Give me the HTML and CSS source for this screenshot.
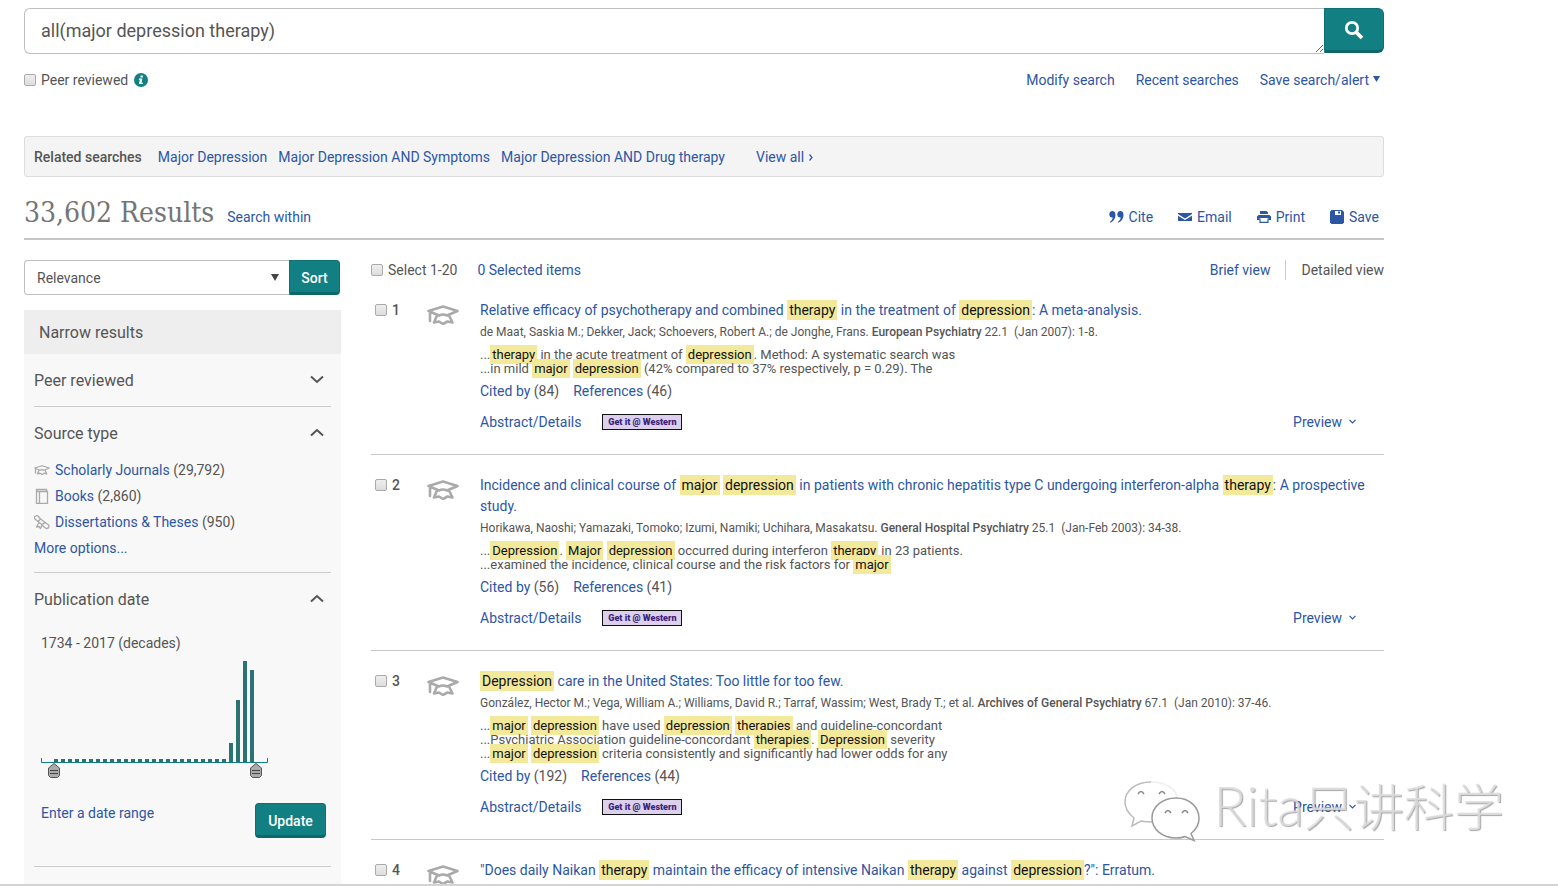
FILE: index.html
```html
<!DOCTYPE html>
<html lang="en">
<head>
<meta charset="utf-8">
<title>Search results</title>
<link rel="stylesheet" href="styles.css">
</head>
<body>
<svg class="sprite" aria-hidden="true">
  <symbol id="cap" viewBox="0 0 32 20">
    <path d="M1.500 6 16 1.500 30.500 6 20 10.500q-4-2-8 0zM3 7v9M10 10.500 7 17.500l5-1 4 2.500 4.500-2.500 5 1-3.500-7" fill="none" stroke="currentColor" stroke-width="2.600" stroke-linejoin="round" stroke-linecap="round"/>
  </symbol>
  <symbol id="down" viewBox="0 0 14 9"><path d="m1 1.500 6 5.500 6-5.500" fill="none" stroke="currentColor" stroke-width="2"/></symbol>
  <symbol id="up" viewBox="0 0 14 9"><path d="m1 7.500 6-5.500 6 5.500" fill="none" stroke="currentColor" stroke-width="2"/></symbol>
  <symbol id="small-down" viewBox="0 0 7 5"><path d="M.5.8 3.500 3.800 6.500.8" fill="none" stroke="currentColor" stroke-width="1.200"/></symbol>
</svg>

<div class="page">
  <div class="content">
    <form class="search">
      <textarea class="search-box" rows="1" aria-label="Search">all(major depression therapy)</textarea>
      <button class="button search-button" type="button" aria-label="Run search">
        <svg width="20" height="20" viewBox="0 0 20 20"><circle cx="8" cy="8" r="5.700" fill="none" stroke="#fff" stroke-width="2.800"/><path d="m12 12 6 6" stroke="#fff" stroke-width="3.800"/></svg>
      </button>
    </form>

    <div class="search-options">
      <label class="check"><input type="checkbox"><span>Peer reviewed</span></label>
      <svg class="info" width="14" height="14" viewBox="0 0 14 14"><circle cx="7" cy="7" r="7" fill="#128083"/><path d="M6.500 2.500h2.300v2H6.500zM5 5.500h3.300L7.600 9.800H9L8.800 11H4.900l.9-4.300H4.800z" fill="#fff"/></svg>
      <nav class="search-links">
        <a href="#">Modify search</a>
        <a href="#">Recent searches</a>
        <a href="#">Save search/alert<svg class="caret" width="7" height="6" viewBox="0 0 7 6"><path d="M0 0h7L3.500 6z" fill="currentColor"/></svg></a>
      </nav>
    </div>

    <div class="related">
      <strong class="related-title">Related searches</strong>
      <a href="#">Major Depression</a>
      <a href="#">Major Depression AND Symptoms</a>
      <a href="#">Major Depression AND Drug therapy</a>
      <a class="view-all" href="#">View all<svg width="4" height="7" viewBox="0 0 4 7"><path d="m.5.500 2.500 3-2.500 3" fill="none" stroke="currentColor" stroke-width="1.200"/></svg></a>
    </div>

    <header class="results-head">
      <h1 class="count">33,602 Results</h1>
      <a href="#">Search within</a>
      <nav class="tools">
        <a href="#"><svg width="15" height="14" viewBox="0 0 15 14"><path id="q" d="M3.300 1C5.300 1 6.500 2.600 6.500 5c0 3.500-2 6.300-5.300 7.800L.7 12c1.900-1.200 2.900-2.700 3-4.500C1.700 7.900.3 6.300.3 4.200.3 2.400 1.500 1 3.300 1z" fill="currentColor"/><use href="#q" x="8"/></svg>Cite</a>
        <a href="#"><svg width="14" height="14" viewBox="0 0 14 14"><path d="M0 3h14v1L7 8.500 0 4zM0 5.800l7 4.300 7-4.300V11H0z" fill="currentColor"/></svg>Email</a>
        <a href="#"><svg width="14" height="14" viewBox="0 0 14 14"><path d="M3 1h6.500L11 2.500V4H3zM1.500 5h11L14 6.500V10h-2.500V8h-9v2H0V6.500z" fill="currentColor"/><path d="M3 8.500V12.400h8V8.500" fill="none" stroke="currentColor" stroke-width="1.200"/></svg>Print</a>
        <a href="#"><svg width="14" height="14" viewBox="0 0 14 14"><path d="M1.500 0H12l2 2v10.500L12.500 14h-11L0 12.500v-11z" fill="currentColor"/><path d="M5 1h6v4H5z" fill="#fff"/><path d="M8 1.500h2v2H8z" fill="currentColor"/></svg>Save</a>
      </nav>
    </header>

    <div class="columns">
      <aside class="sidebar">
        <form class="sort">
          <div class="select-wrap">
            <select class="select" aria-label="Sort by"><option>Relevance</option></select>
            <svg class="select-arrow" width="8" height="7" viewBox="0 0 8 7"><path d="M0 0h8L4 7z" fill="#444"/></svg>
          </div>
          <button class="button sort-button" type="button">Sort</button>
        </form>

        <div class="panel">
          <h2 class="panel-title">Narrow results</h2>
          <section class="facet">
            <h3 class="facet-head">Peer reviewed<svg width="14" height="9"><use href="#down"/></svg></h3>
          </section>
          <section class="facet">
            <h3 class="facet-head">Source type<svg width="14" height="9"><use href="#up"/></svg></h3>
            <ul class="sources">
              <li><svg width="16" height="10"><use href="#cap"/></svg><span><a href="#">Scholarly Journals</a> (29,792)</span></li>
              <li><svg width="16" height="16" viewBox="0 0 16 16"><path d="M2.500 3.500h11v12h-11zM5.500 3.500v12M2.500 3.500V1.500h10v2" fill="none" stroke="currentColor" stroke-width="1.300"/></svg><span><a href="#">Books</a> (2,860)</span></li>
              <li><svg width="16" height="16" viewBox="0 0 16 16"><path d="M4.500 2.500a2 2 0 0 0-3.500 2.500l3 2.500 2.500-2.500zM6.500 5 14 10.500a2 2 0 0 1-2.500 3.500L8 11.500M4 7.500l5 4M11 9a2 2 0 0 0-2 3M5 8.500 2.500 13l2.500-.5 1.500 2 1.500-3.500" fill="none" stroke="currentColor" stroke-width="1.300" stroke-linejoin="round"/></svg><span><a href="#">Dissertations &amp; Theses</a> (950)</span></li>
              <li><a href="#">More options...</a></li>
            </ul>
          </section>
          <section class="facet">
            <h3 class="facet-head">Publication date<svg width="14" height="9"><use href="#up"/></svg></h3>
            <div class="dates">
              <p class="range">1734 - 2017 (decades)</p>
              <svg class="chart" width="228" height="120" viewBox="0 0 228 120" role="img" aria-label="Results by decade">
                <path d="M13 101H185" stroke="#2b7273" stroke-width="4" stroke-dasharray="4 3"/>
                <path d="M188 83h4v20h-4zM195 40h4v63h-4zM202 1h4v102h-4zM209 10h4v93h-4z" fill="#2b7273"/>
                <path d="M.5 98v4.500h226V98" fill="none" stroke="#128083"/>
                <g id="grip"><path d="M13 103.500 18.500 108v7.500l-2 2h-7l-2-2V108z" fill="#aaa" stroke="#555"/><path d="M9 110.500h8M9 113.500h8" stroke="#444"/></g>
                <use href="#grip" x="202"/>
              </svg>
              <div class="date-actions"><a href="#">Enter a date range</a><button class="button update-button" type="button">Update</button></div>
            </div>
          </section>
        </div>
      </aside>

      <main class="results">
        <div class="list-head">
          <label class="check"><input type="checkbox"><span>Select 1-20</span></label>
          <a href="#">0 Selected items</a>
          <div class="views"><a href="#">Brief view</a><span class="current-view">Detailed view</span></div>
        </div>

        <article class="item">
          <label class="check number"><input type="checkbox"><span>1</span></label>
          <svg class="cap" width="32" height="20"><use href="#cap"/></svg>
          <div class="body">
            <h3 class="title"><a href="#">Relative efficacy of psychotherapy and combined <mark>therapy</mark> in the treatment of <mark>depression</mark>: A meta-analysis.</a></h3>
            <p class="authors">de Maat, Saskia M.; Dekker, Jack; Schoevers, Robert A.; de Jonghe, Frans. <b>European Psychiatry</b> 22.1 &nbsp;(Jan 2007): 1-8.</p>
            <p class="snippet">...<mark>therapy</mark> in the acute treatment of <mark>depression</mark>. Method: A systematic search was<br>...in mild <mark>major</mark> <mark>depression</mark> (42% compared to 37% respectively, p = 0.29). The</p>
            <p class="cites"><span><a href="#">Cited by</a> (84)</span><span><a href="#">References</a> (46)</span></p>
            <div class="actions"><a href="#">Abstract/Details</a><a class="western" href="#">Get it @ Western</a><a class="preview" href="#">Preview<svg width="7" height="5"><use href="#small-down"/></svg></a></div>
          </div>
        </article>

        <article class="item">
          <label class="check number"><input type="checkbox"><span>2</span></label>
          <svg class="cap" width="32" height="20"><use href="#cap"/></svg>
          <div class="body">
            <h3 class="title"><a href="#">Incidence and clinical course of <mark>major</mark> <mark>depression</mark> in patients with chronic hepatitis type C undergoing interferon-alpha <mark>therapy</mark>: A prospective study.</a></h3>
            <p class="authors">Horikawa, Naoshi; Yamazaki, Tomoko; Izumi, Namiki; Uchihara, Masakatsu. <b>General Hospital Psychiatry</b> 25.1 &nbsp;(Jan-Feb 2003): 34-38.</p>
            <p class="snippet">...<mark>Depression</mark>. <mark>Major</mark> <mark>depression</mark> occurred during interferon <mark>therapy</mark> in 23 patients.<br>...examined the incidence, clinical course and the risk factors for <mark>major</mark></p>
            <p class="cites"><span><a href="#">Cited by</a> (56)</span><span><a href="#">References</a> (41)</span></p>
            <div class="actions"><a href="#">Abstract/Details</a><a class="western" href="#">Get it @ Western</a><a class="preview" href="#">Preview<svg width="7" height="5"><use href="#small-down"/></svg></a></div>
          </div>
        </article>

        <article class="item">
          <label class="check number"><input type="checkbox"><span>3</span></label>
          <svg class="cap" width="32" height="20"><use href="#cap"/></svg>
          <div class="body">
            <h3 class="title"><a href="#"><mark>Depression</mark> care in the United States: Too little for too few.</a></h3>
            <p class="authors">González, Hector M.; Vega, William A.; Williams, David R.; Tarraf, Wassim; West, Brady T.; et al. <b>Archives of General Psychiatry</b> 67.1 &nbsp;(Jan 2010): 37-46.</p>
            <p class="snippet">...<mark>major</mark> <mark>depression</mark> have used <mark>depression</mark> <mark>therapies</mark> and guideline-concordant<br>...Psychiatric Association guideline-concordant <mark>therapies</mark>. <mark>Depression</mark> severity<br>...<mark>major</mark> <mark>depression</mark> criteria consistently and significantly had lower odds for any</p>
            <p class="cites"><span><a href="#">Cited by</a> (192)</span><span><a href="#">References</a> (44)</span></p>
            <div class="actions"><a href="#">Abstract/Details</a><a class="western" href="#">Get it @ Western</a><a class="preview" href="#">Preview<svg width="7" height="5"><use href="#small-down"/></svg></a></div>
          </div>
        </article>

        <article class="item">
          <label class="check number"><input type="checkbox"><span>4</span></label>
          <svg class="cap" width="32" height="20"><use href="#cap"/></svg>
          <div class="body">
            <h3 class="title"><a href="#">"Does daily Naikan <mark>therapy</mark> maintain the efficacy of intensive Naikan <mark>therapy</mark> against <mark>depression</mark>?": Erratum.</a></h3>
          </div>
        </article>
      </main>
    </div>
  </div>
</div>

<div class="watermark">
  <svg width="78" height="62" viewBox="0 0 78 62" fill="#fff" stroke="#999" stroke-width="1.500">
    <path d="M28 2C12 2 2 11 2 22c0 7 4 12 9 16l-2 8 9-5c4 1 7 1 11 1 14 0 25-9 25-20S43 2 28 2z" stroke="none"/>
    <path d="M28 2C43 2 54 9 54 19" fill="none" stroke="#eee"/>
    <path d="M28 2C12 2 2 11 2 22c0 7 4 12 9 16l-2 8 9-5c4 1 7 1 11 1" fill="none" stroke="#bbb"/>
    <path d="M15 14q3-5 6 0M36 14q3-5 6 0" fill="none" stroke="#888"/>
    <path d="M53 18c-14 0-24 9-24 20s10 20 24 20c3 0 6 0 9-1.500l9 4-3-7c5-4 8-9 8-15 0-11-9-20.500-23-20.500z"/>
    <path d="M42 33q3-5 6 0M59 33q3-5 6 0" fill="none" stroke="#888"/>
  </svg>
  <span class="watermark-text"><span class="watermark-latin">Rita</span>只讲科学</span>
</div>
</body>
</html>
```
FILE: styles.css
```css
* { box-sizing: border-box; }
body {
  margin: 0;
  background: #fff;
  color: #555;
  font: 14px/20px Roboto, "Liberation Sans", sans-serif;
}
h1, h2, h3, p, ul { margin: 0; padding: 0; font-weight: 400; }
ul { list-style: none; }
a { color: #2d56a4; text-decoration: none; }
button, select, textarea { font: inherit; color: inherit; margin: 0; }
.sprite { display: none; }

.page {
  height: 100vh;
  overflow-y: auto;
  scrollbar-width: none;
  border-bottom: 2px solid #d4d4d4;
}
.content { max-width: 1408px; padding: 8px 24px 0; }

.button {
  border: 1px solid #0e7073;
  border-bottom: 3px solid #0d686b;
  background: #128083;
  color: #fff;
  font-weight: 500;
  padding: 2px 0 0;
}
.search { display: flex; align-items: flex-start; }
.search-box {
  flex: 1;
  height: 46px;
  padding: 11px 16px;
  border: 1px solid #bfbfbf;
  border-right: 0;
  border-radius: 6px 0 0 6px;
  font-size: 18px;
  line-height: 22px;
  overflow: hidden;
  outline: 0;
}
.search-button {
  display: flex;
  align-items: center;
  justify-content: center;
  width: 60px;
  height: 45px;
  padding: 0;
  border-radius: 0 6px 6px 0;
}
.check { display: flex; align-items: center; gap: 5px; }
.check input {
  appearance: none;
  width: 12px;
  height: 12px;
  margin: 0;
  border: 1px solid #aaa;
  border-radius: 2px;
  background: linear-gradient(#eee, #ddd);
}
.search-options { display: flex; align-items: center; margin-top: 16px; }
.info { margin-left: 6px; }
.search-links { display: flex; gap: 21px; margin-left: auto; padding-right: 4px; }
.caret { margin: 0 0 3px 4px; }

.related {
  display: flex;
  gap: 11px;
  margin-top: 46px;
  padding: 10px 9px 9px;
  border: 1px solid #ddd;
  border-radius: 3px;
  background: #f4f4f4;
}
.related-title { font-weight: 500; margin-right: 5px; }
.view-all { margin-left: 20px; }
.view-all svg { margin: 0 0 1px 5px; }

.results-head {
  display: flex;
  align-items: baseline;
  gap: 13px;
  margin-top: 16px;
  padding-bottom: 5px;
  border-bottom: 2px solid #c6c6c6;
}
.count {
  color: #757575;
  font: 28px/40px "DejaVu Serif Condensed", "DejaVu Serif", serif;
}
.tools { display: flex; gap: 25px; margin-left: auto; padding-right: 5px; }
.tools svg { margin-right: 5px; vertical-align: -2px; }

.columns { display: flex; gap: 30px; padding-top: 20px; }
.sidebar { flex: 0 0 317px; }
.sort { display: flex; height: 35px; padding-right: 1px; }
.select-wrap { position: relative; flex: 1; }
.select {
  appearance: none;
  width: 100%;
  height: 35px;
  padding: 0 12px;
  border: 1px solid #bfbfbf;
  border-right: 0;
  border-radius: 4px 0 0 4px;
  background: #fff;
}
.select-arrow { position: absolute; right: 10px; top: 14px; }
.sort-button { width: 51px; border-radius: 0 4px 4px 0; }

.panel { margin-top: 15px; padding-bottom: 60px; background: #f8f8f8; }
.panel-title { padding: 13px 15px 11px; background: #eee; font-size: 16px; line-height: 20px; }
.facet { margin: 0 10px; padding: 17px 0 15px; border-bottom: 1px solid #ccc; }
.facet-head {
  display: flex;
  align-items: center;
  justify-content: space-between;
  padding-right: 7px;
  font-size: 16px;
  line-height: 20px;
}
.facet-head svg { margin-bottom: 3px; }
.sources { padding-top: 13px; margin-bottom: -4px; }
.sources li { display: flex; align-items: center; gap: 5px; line-height: 26px; }
.sources svg { color: #aaa; }
.dates { padding: 23px 5px 13px 7px; }
.chart { display: block; margin-top: 7px; }
.date-actions { display: flex; justify-content: space-between; margin-top: 23px; }
.update-button { width: 71px; height: 35px; border-radius: 4px; }

.results { flex: 1; min-width: 0; }
.list-head { display: flex; align-items: center; gap: 20px; }
.views { display: flex; margin-left: auto; }
.current-view { margin-left: 15px; padding-left: 15px; border-left: 1px solid #ccc; }
.item {
  display: grid;
  grid-template-columns: 52px 53px 1fr;
  align-items: start;
  padding: 20px 0 22px 4px;
  border-bottom: 1px solid #c8c8c8;
}
.number { font-weight: 500; }
.cap { margin-top: 5px; color: #aaa; }
.title { font-size: 14px; line-height: 21px; }
mark { padding: 2px; background: #f3e99b; color: #111; }
.authors { font-size: 12px; line-height: 22px; }
.authors b { font-weight: 500; }
.snippet { margin-top: 5px; font-size: 13px; line-height: 14px; }
.cites { display: flex; gap: 14px; margin-top: 5px; }
.actions { display: flex; align-items: center; gap: 21px; margin-top: 11px; padding-right: 28px; }
.western {
  width: 80px;
  border: 1px solid #111;
  background: #dcd0ec;
  color: #3b1f7a;
  font: 900 9px/14px Roboto, "Liberation Sans", sans-serif;
  text-align: center;
  white-space: nowrap;
}
.preview { margin-left: auto; }
.preview svg { margin: 0 0 3px 7px; }

.watermark {
  position: absolute;
  right: 54px;
  bottom: 44px;
  display: flex;
  align-items: flex-end;
  gap: 12px;
  pointer-events: none;
}
.watermark-text {
  color: rgba(222, 222, 222, 0.85);
  font: 300 50px/70px Lato, "Noto Sans CJK SC", sans-serif;
  text-shadow: 1px 1px 1px rgba(110, 110, 110, 0.6);
}
.watermark-latin { font-size: 55px; }
```
